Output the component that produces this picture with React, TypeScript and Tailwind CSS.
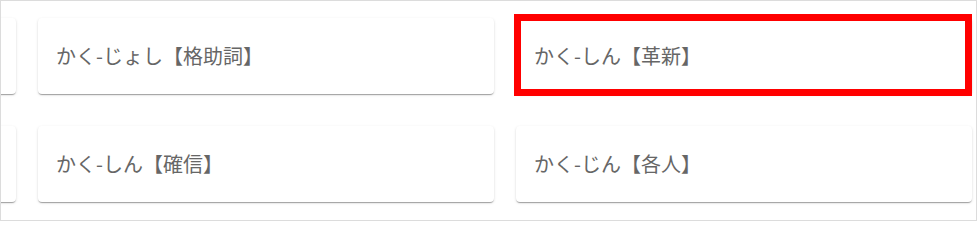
import React from "react";

// first column is the cut-off card at the left edge, its text lies off screen
const rows: string[][] = [
  ["", "かく-じょし【格助詞】", "かく-しん【革新】"],
  ["", "かく-しん【確信】", "かく-じん【各人】"],
];

function Card({ label, marked }: { label: string; marked?: boolean }) {
  return (
    <div className="relative w-[456px] h-[76px] shrink-0 flex items-center pl-[18px] bg-white rounded-[4px] shadow-[0_2px_1px_-1px_rgba(0,0,0,0.2),0_1px_1px_0_rgba(0,0,0,0.14),0_1px_3px_0_rgba(0,0,0,0.12)]">
      {label && (
        <span className="text-[20px] leading-none text-[#666666] font-['Noto_Sans_CJK_JP','Noto_Sans',sans-serif]">
          {label}
        </span>
      )}
      {marked && (
        <div className="absolute -left-[2px] -top-[4px] right-0 -bottom-[2px] border-[7px] border-[#ff0000]" />
      )}
    </div>
  );
}

export default function App() {
  return (
    <div className="w-[978px] h-[222px] bg-white">
      <div className="w-[977px] h-[221px] border border-[#dcdcdc] overflow-hidden pt-[17px]">
        <div className="flex flex-col gap-[32px] ml-[-441px]">
          {rows.map((row, i) => (
            <div key={i} className="flex gap-[22px]">
              {row.map((label, j) => (
                <Card key={j} label={label} marked={i === 0 && j === 2} />
              ))}
            </div>
          ))}
        </div>
      </div>
    </div>
  );
}
